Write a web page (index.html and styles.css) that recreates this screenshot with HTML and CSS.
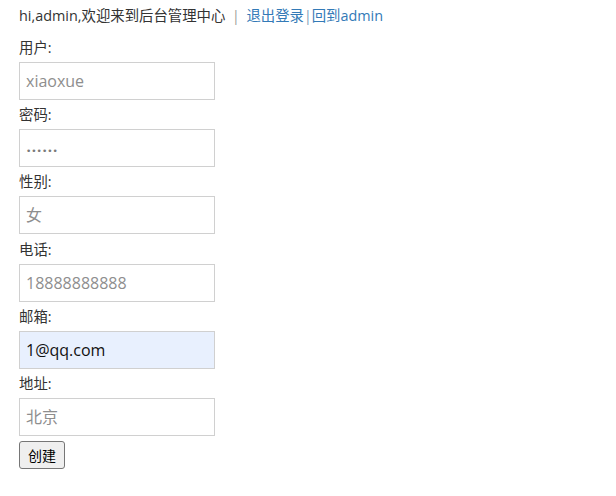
FILE: index.html
```html
<!DOCTYPE html>
<html lang="zh">
<head>
<meta charset="utf-8">
<title>后台管理中心</title>
<link rel="stylesheet" href="styles.css">
</head>
<body>
<div class="page">
  <div class="topbar">
    <span class="greet">hi,admin,欢迎来到后台管理中心</span>
    <span class="sep">|</span>
    <a class="link" href="#">退出登录</a><span class="sep2">|</span><a class="link" href="#">回到admin</a>
  </div>
  <form class="form">
    <div class="field">
      <label class="label">用户:</label>
      <input class="input" type="text" placeholder="xiaoxue">
    </div>
    <div class="field">
      <label class="label">密码:</label>
      <input class="input pwd" type="text" placeholder="••••••">
    </div>
    <div class="field">
      <label class="label">性别:</label>
      <input class="input" type="text" placeholder="女">
    </div>
    <div class="field">
      <label class="label">电话:</label>
      <input class="input" type="text" placeholder="18888888888">
    </div>
    <div class="field">
      <label class="label">邮箱:</label>
      <input class="input filled" type="text" value="1@qq.com">
    </div>
    <div class="field">
      <label class="label">地址:</label>
      <input class="input" type="text" placeholder="北京">
    </div>
    <button class="btn" type="button">创建</button>
  </form>
</div>
</body>
</html>
```
FILE: styles.css
```css
html, body {
  margin: 0;
  padding: 0;
  background: #fff;
}
body {
  font-family: "Open Sans", "Noto Sans CJK SC", sans-serif;
  font-size: 14px;
  color: #333;
}
.page {
  padding: 6px 19px;
}
.topbar {
  line-height: 20px;
  height: 20px;
  white-space: nowrap;
}
.greet {
  font-size: 14.4px;
}
.sep {
  color: #9a9a9a;
  margin: 0 3px;
}
.sep2 {
  color: #7a9ab7;
}
.link {
  color: #337ab7;
  text-decoration: none;
  font-size: 14.4px;
}
.form {
  display: flex;
  flex-direction: column;
  align-items: flex-start;
  margin-top: 12px;
}
.field {
  display: flex;
  flex-direction: column;
  align-items: flex-start;
  margin-bottom: 5.2px;
}
.label {
  line-height: 20px;
  margin-bottom: 4px;
  font-size: 14.4px;
}
.input {
  box-sizing: border-box;
  width: 196px;
  height: 38px;
  margin: 0;
  padding: 0 6px;
  border: 1px solid #d0d0d0;
  border-radius: 0;
  font-family: "Open Sans", "Noto Sans CJK SC", sans-serif;
  font-size: 16px;
  color: #000;
  background: #fff;
  outline: none;
}
.input::placeholder {
  color: #8e8e8e;
  opacity: 1;
}
.pwd::placeholder {
  font-family: "DejaVu Sans", sans-serif;
  font-size: 9px;
  letter-spacing: 0px;
  color: #7a7a7a;
}
.filled {
  background: #e8f0fe;
  color: #111;
}
.btn {
  box-sizing: border-box;
  margin-top: 0;
  height: 28px;
  padding: 0 8px;
  border: 1px solid #767676;
  border-radius: 3px;
  background: #efefef;
  font-family: "Noto Sans CJK SC", sans-serif;
  font-size: 14px;
  color: #000;
}
```
